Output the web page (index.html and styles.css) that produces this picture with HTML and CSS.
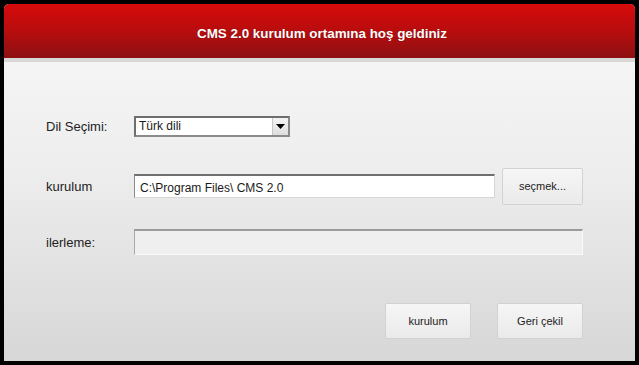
FILE: index.html
```html
<!DOCTYPE html>
<html lang="tr">
<head>
    <meta charset="UTF-8">
    <meta name="viewport" content="width=device-width, initial-scale=1.0">
    <title>CMS 2.0 kurulum</title>
    <link rel="stylesheet" href="styles.css">
</head>
<body>
    <div class="window">
        <div class="header">
            <h1>CMS 2.0 kurulum ortamına hoş geldiniz</h1>
        </div>

        <div class="content">
            <div class="row row-lang">
                <label class="label">Dil Seçimi:</label>
                <div class="select">
                    <span class="select-text">Türk dili</span>
                    <span class="select-arrow">
                        <svg width="9" height="5" viewBox="0 0 9 5"><polygon points="0,0 9,0 4.5,5" fill="#000"/></svg>
                    </span>
                </div>
            </div>

            <div class="row row-path">
                <label class="label">kurulum</label>
                <div class="text-input">C:\Program Files\ CMS 2.0</div>
                <button class="btn btn-browse">seçmek...</button>
            </div>

            <div class="row row-progress">
                <label class="label">ilerleme:</label>
                <div class="progress"></div>
            </div>

            <div class="actions">
                <button class="btn btn-action">kurulum</button>
                <button class="btn btn-action">Geri çekil</button>
            </div>
        </div>
    </div>
</body>
</html>
```

FILE: styles.css
```css
html, body {
    margin: 0;
    padding: 0;
}
body {
    background-color: #000;
    padding: 4px;
    width: 631px;
    height: 357px;
    font-family: "Liberation Sans", Arial, sans-serif;
    color: #1a1a1a;
}
.window {
    width: 631px;
    height: 357px;
    border-radius: 5px 5px 0 0;
    overflow: hidden;
    background: linear-gradient(to bottom, #f8f8f8 0%, #eeeeee 45%, #d7d7d7 100%);
    display: flex;
    flex-direction: column;
}
.header {
    height: 54px;
    flex-shrink: 0;
    background: linear-gradient(to bottom, #d60a0a 0%, #b80d0e 50%, #8c1013 100%);
    border-bottom: 4px solid #d8d8d8;
    display: flex;
    align-items: center;
    justify-content: center;
}
.header h1 {
    margin: 4px 0 0 5px;
    font-size: 13.4px;
    font-weight: bold;
    color: #fff;
    text-shadow: 0 0 1px rgba(80, 0, 0, 0.5);
}
.content {
    padding: 44px 52px 0 42px;
    display: flex;
    flex-direction: column;
}
.row {
    height: 40px;
    display: flex;
    align-items: center;
}
.row-path {
    margin-top: 20px;
}
.row-progress {
    margin-top: 16px;
}
.label {
    width: 88px;
    font-size: 13px;
    color: #222;
}
.select {
    width: 156px;
    height: 21px;
    box-sizing: border-box;
    border: 2px solid #8a8a8a;
    border-top-color: #6e6e6e;
    border-left-color: #6e6e6e;
    background-color: #fff;
    display: flex;
    align-items: center;
}
.select-text {
    flex: 1;
    font-size: 12px;
    padding-left: 3px;
}
.select-arrow {
    width: 15px;
    height: 17px;
    border-left: 1px solid #c8c8c8;
    background: linear-gradient(to bottom, #f4f4f4, #dedede);
    display: flex;
    align-items: center;
    justify-content: center;
}
.text-input {
    width: 361px;
    height: 24px;
    box-sizing: border-box;
    border: 1px solid #d6d6d6;
    border-top: 2px solid #6f6f6f;
    border-left: 1px solid #8a8a8a;
    background-color: #fff;
    font-size: 12px;
    padding: 2px 0 0 5px;
    display: flex;
    align-items: center;
}
.btn {
    font-family: "Liberation Sans", Arial, sans-serif;
    font-size: 11px;
    color: #222;
    border: 1px solid #d2d2d2;
    border-radius: 2px;
    background: linear-gradient(to bottom, #f6f6f6, #eaeaea);
    padding: 0;
    cursor: pointer;
}
.btn-browse {
    width: 81px;
    height: 37px;
    margin-left: 7px;
}
.progress {
    width: 450px;
    height: 26px;
    box-sizing: border-box;
    border: 1px solid #fafafa;
    border-top: 2px solid #9a9a9a;
    border-left: 1px solid #a8a8a8;
    background-color: #efefef;
}
.actions {
    margin-top: 41px;
    display: flex;
    justify-content: flex-end;
    gap: 26px;
}
.btn-action {
    width: 86px;
    height: 36px;
}
```
